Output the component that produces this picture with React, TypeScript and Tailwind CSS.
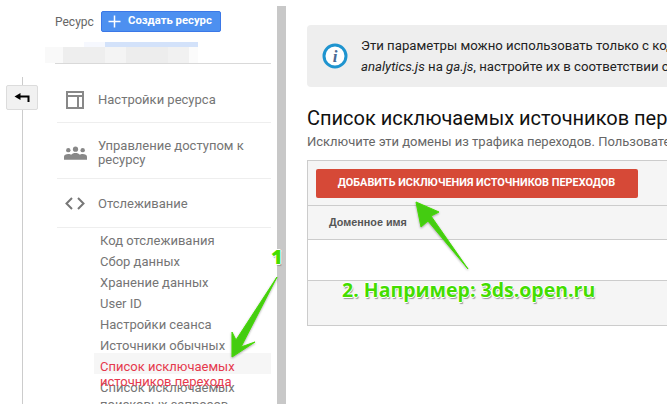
export default function App() {
  const sub = ["Код отслеживания", "Сбор данных", "Хранение данных", "User ID", "Настройки сеанса", "Источники обычных"];
  const outline = "drop-shadow-[0_1px_1px_rgba(0,0,0,0.35)]";
  return (
    <div className="relative flex h-[404px] w-[667px] overflow-hidden bg-white font-['Roboto',sans-serif]">
      {/* rail */}
      <div className="flex w-[45px] shrink-0 flex-col items-start pl-[6px] pt-[77px]">
        <div className="ml-[16px] h-[8px] w-px bg-[#ccc]" />
        <div className="flex h-[25px] w-[32px] items-center justify-center rounded-[2px] border border-[#dcdcdc] bg-[#f1f1f1]">
          <svg width="16" height="10" viewBox="0 0 16 10"><path d="M5 3.500H14.500V9" stroke="#000" strokeWidth="2" fill="none" /><path d="M0.500 3.500 6.500 0V7Z" fill="#000" /></svg>
        </div>
        <div className="ml-[16px] h-[294px] w-px bg-[#ccc]" />
      </div>
      {/* nav */}
      <div className="flex w-[226px] shrink-0 flex-col">
        <div className="flex h-[32px] items-end pl-[10px]">
          <span className="mb-[3px] w-[46px] text-[12px] leading-[14px] text-[#666]">Ресурс</span>
          <div className="flex h-[21px] w-[120px] items-center rounded-[2px] border border-[#3b78e7] bg-[#4d90f0] pl-[6px] text-[11.3px] font-bold text-white">
            <svg width="13" height="13" viewBox="0 0 13 13" className="mr-[7px] shrink-0"><path d="M6.500 0.500v12M0.500 6.500h12" stroke="#fff" strokeWidth="1.500" /></svg>
            Создать ресурс
          </div>
        </div>
        <div className="mt-[10px] flex h-[21px] w-[153px] flex-col">
          <div className="flex h-[5px]">
            <div className="ml-[39px] w-[21px] bg-[#f6f8fe]" />
            <div className="w-[93px] bg-[#d3e2fa]" />
          </div>
          <div className="flex h-[16px]">
            <div className="w-[18px] bg-[#f9f9f9]" />
            <div className="w-[42px] bg-[#eeeeee]" />
            <div className="w-[21px] bg-[#f4f4f4]" />
            <div className="w-[42px] bg-[#ededed]" />
            <div className="w-[21px] bg-[#f1f1f1]" />
            <div className="w-[9px] bg-[#fbfbfb]" />
          </div>
        </div>
        <div className="ml-[10px] h-px bg-[#d9d9d9]" />
        <div className="ml-[12px] flex h-[59px] items-center border-b border-[#eee] pt-[13px]">
          <svg width="18" height="18" viewBox="0 0 18 18" className="ml-[9px] mr-[14px]"><path d="M1 1h16v16H1zM1 5h16M12 5v12" stroke="#888" strokeWidth="2" fill="none" /></svg>
          <span className="text-[13px] text-[#757575]">Настройки ресурса</span>
        </div>
        <div className="ml-[12px] flex h-[56px] items-center border-b border-[#eee] pt-[5px]">
          <svg width="23" height="14" viewBox="0 0 24 14" className="ml-[7px] mr-[11px]" fill="#888"><circle cx="12" cy="3" r="2.700" /><circle cx="4.500" cy="4" r="2.300" /><circle cx="19.500" cy="4" r="2.300" /><path d="M0 14v-3c0-2 2-3 4.500-3 1.500 0 2.500 0.300 3 0.800C8.500 7.500 10 7 12 7s3.500 0.500 4.500 1.800c0.500-0.500 1.500-0.800 3-0.800C22 8 24 9 24 11v3Z" /></svg>
          <span className="w-[160px] text-[13px] leading-[14px] text-[#757575]">Управление доступом к ресурсу</span>
        </div>
        <div className="ml-[12px] flex h-[49px] items-center border-b border-[#eee] pt-[1px]">
          <svg width="20" height="13" viewBox="0 0 20 13" className="ml-[8px] mr-[13px]" fill="none" stroke="#777" strokeWidth="2"><path d="M7 1 1.500 6.500 7 12M13 1l5.500 5.500L13 12" /></svg>
          <span className="text-[13px] text-[#757575]">Отслеживание</span>
        </div>
        <div className="ml-[49px] mt-[2px] flex flex-col text-[13px] leading-[21px] text-[#757575]">
          {sub.map((s) => (<div key={s} className="h-[21px] pl-[6px]">{s}</div>))}
          <div className="mt-[-3px] h-[21px] bg-[#f6f6f6] pl-[6px] pt-[3px] text-[#e5394d]">Список исключаемых</div>
          <div className="relative h-[24px] pl-[6px] pt-[3px]">
            <div className="absolute left-[6px] top-[-3px] text-[#e5394d]">источников перехода</div>
            <div>Список исключаемых</div>
            <div className="mt-[-4px]">поисковых запросов</div>
          </div>
        </div>
      </div>
      {/* scroll strip */}
      <div className="ml-[6px] mt-[6px] h-[398px] w-[9px] shrink-0 bg-[#c8c8c8]" />
      {/* main */}
      <div className="ml-[21px] w-[400px] shrink-0 pt-[25px]">
        <div className="flex h-[62px] items-center rounded-[4px] bg-[#eee] pl-[15px]">
          <svg width="26" height="26" viewBox="0 0 26 26" className="mr-[13px] shrink-0"><circle cx="13" cy="13" r="11" fill="#fff" stroke="#1f94cf" strokeWidth="3" /><text x="13" y="19" textAnchor="middle" fontSize="17" fontWeight="bold" fontStyle="italic" fontFamily="'Liberation Serif',serif" fill="#4a6a94">i</text></svg>
          <div className="whitespace-nowrap text-[13.2px] leading-[21px] text-[#222]">
            <div>Эти параметры можно использовать только с кодом</div>
            <div><i>analytics.js</i> на <i>ga.js</i>, настройте их в соответствии с</div>
          </div>
        </div>
        <h1 className="mt-[18px] whitespace-nowrap text-[20px] font-normal leading-[26px] text-[#111]">Список исключаемых источников переходов</h1>
        <p className="mt-[2px] whitespace-nowrap text-[13px] leading-[18px] text-[#666]">Исключите эти домены из трафика переходов. Пользователи</p>
        <div className="mt-[9px] h-[166px] w-[420px] border border-[#ccc] bg-[#f5f5f5]">
          <div className="h-[45px] border-b border-[#ccc] pl-[8px] pt-[8px]">
            <div className="flex h-[29px] w-[322px] items-center justify-center rounded-[2px] bg-[#d64937] pr-[1px] text-[10.9px] font-bold text-white">ДОБАВИТЬ ИСКЛЮЧЕНИЯ ИСТОЧНИКОВ ПЕРЕХОДОВ</div>
          </div>
          <div className="flex h-[34px] items-center border-b border-[#ccc] pl-[21px] font-['Liberation_Sans',sans-serif] text-[10.8px] font-bold text-[#555]">Доменное имя</div>
          <div className="h-[41px] border-b border-[#ccc] bg-white" />
        </div>
      </div>
      {/* annotations */}
      <svg width="667" height="404" className={`pointer-events-none absolute left-0 top-0 ${outline}`}>
        <path d="M277 277 241 347 255 342 232 357 232 332 236 340Z" fill="#44cc11" stroke="#44dd00" strokeWidth="1" strokeLinejoin="round" />
        <path d="M468 269 428 221 421 227 416 202 439 212 431 216Z" fill="#44cc11" stroke="#44dd00" strokeWidth="1" strokeLinejoin="round" />
      </svg>
      <span className="absolute left-[271px] top-[246px] font-['Open_Sans',sans-serif] text-[20px] font-extrabold leading-[22px] text-[#44dd00] [text-shadow:1px_0_0_#fff,-1px_0_0_#fff,0_1px_0_#fff,0_-1px_0_#fff,1px_2px_1px_#999]">1</span>
      <span className="absolute left-[342px] top-[276px] whitespace-nowrap font-['Open_Sans',sans-serif] text-[19.5px] font-bold leading-[28px] text-[#44dd00] [text-shadow:1px_0_0_#fff,-1px_0_0_#fff,0_1px_0_#fff,0_-1px_0_#fff,1px_2px_1px_#999]">2. Например: 3ds.open.ru</span>
    </div>
  );
}
